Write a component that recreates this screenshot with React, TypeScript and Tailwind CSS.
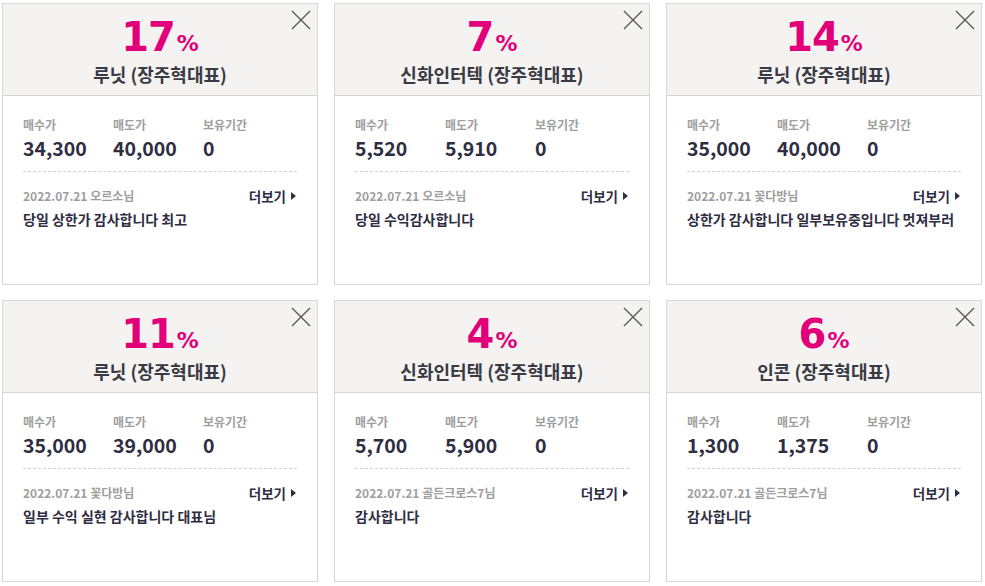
import React from "react";

type Card = {
  pct: string;
  name: string;
  buy: string;
  sell: string;
  hold: string;
  user: string;
  msg: string;
};

const cards: Card[] = [
  { pct: "17", name: "루닛 (장주혁대표)", buy: "34,300", sell: "40,000", hold: "0", user: "오르소님", msg: "당일 상한가 감사합니다 최고" },
  { pct: "7", name: "신화인터텍 (장주혁대표)", buy: "5,520", sell: "5,910", hold: "0", user: "오르소님", msg: "당일 수익감사합니다" },
  { pct: "14", name: "루닛 (장주혁대표)", buy: "35,000", sell: "40,000", hold: "0", user: "꽃다방님", msg: "상한가 감사합니다 일부보유중입니다 멋져부러" },
  { pct: "11", name: "루닛 (장주혁대표)", buy: "35,000", sell: "39,000", hold: "0", user: "꽃다방님", msg: "일부 수익 실현 감사합니다 대표님" },
  { pct: "4", name: "신화인터텍 (장주혁대표)", buy: "5,700", sell: "5,900", hold: "0", user: "골든크로스7님", msg: "감사합니다" },
  { pct: "6", name: "인콘 (장주혁대표)", buy: "1,300", sell: "1,375", hold: "0", user: "골든크로스7님", msg: "감사합니다" },
];

const kr = "font-['Noto_Sans_CJK_KR','Noto_Sans',sans-serif]";

function CloseIcon() {
  return (
    <svg width="20" height="20" viewBox="0 0 20 20" className="block">
      <path d="M1 1 L19 19 M19 1 L1 19" stroke="#5a5a5a" strokeWidth="1.4" fill="none" />
    </svg>
  );
}

function Stat({ label, value }: { label: string; value: string }) {
  return (
    <div className="w-[90px] flex flex-col">
      <div className="text-[12px] leading-[16px] font-bold text-[#9e9e9e]">{label}</div>
      <div className="mt-[3px] text-[19.5px] leading-[24px] font-bold text-[#2f2d42]">{value}</div>
    </div>
  );
}

function ReviewCard({ c }: { c: Card }) {
  return (
    <div className={`relative flex flex-col h-[282px] border border-[#d6d6d6] bg-white ${kr}`}>
      <div className="h-[92px] bg-[#f4f3f1] border-b border-[#d6d6d6] flex flex-col items-center">
        <div className="mt-[13px] h-[40px] flex items-baseline text-[#e2007a] font-['DejaVu_Sans',sans-serif] font-bold">
          <span className="text-[40px] leading-[40px] tracking-[-1px]">{c.pct}</span>
          <span className="ml-[2px] text-[22px] leading-[40px]">%</span>
        </div>
        <div className="mt-[5px] text-[18px] leading-[24px] font-bold text-[#3a3a44]">{c.name}</div>
      </div>
      <button className="absolute right-[6px] top-[6px]" aria-label="닫기">
        <CloseIcon />
      </button>
      <div className="px-[20px] flex flex-col">
        <div className="pt-[21px] flex">
          <Stat label="매수가" value={c.buy} />
          <Stat label="매도가" value={c.sell} />
          <Stat label="보유기간" value={c.hold} />
        </div>
        <div className="mt-[11px] border-t border-dashed border-[#cfcfcf]" />
        <div className="mt-[15px] flex items-center justify-between h-[18px]">
          <div className="text-[12px] leading-[18px] font-bold text-[#9e9e9e]">
            2022.07.21 {c.user}
          </div>
          <div className="flex items-center text-[13.5px] leading-[18px] font-bold text-[#2f2d42]">
            더보기
            <svg width="6" height="8" viewBox="0 0 6 8" className="ml-[5px]">
              <path d="M0 0 L5 4 L0 8 Z" fill="#2f2d42" />
            </svg>
          </div>
        </div>
        <div className="mt-[4px] text-[14px] leading-[20px] font-bold text-[#2f2d42]">{c.msg}</div>
      </div>
    </div>
  );
}

export default function App() {
  return (
    <div className="w-[985px] h-[586px] bg-white pl-[2px] pt-[3px]">
      <div className="grid grid-cols-[316px_316px_316px] gap-x-[16px] gap-y-[15px]">
        {cards.map((c, i) => (
          <ReviewCard key={i} c={c} />
        ))}
      </div>
    </div>
  );
}
